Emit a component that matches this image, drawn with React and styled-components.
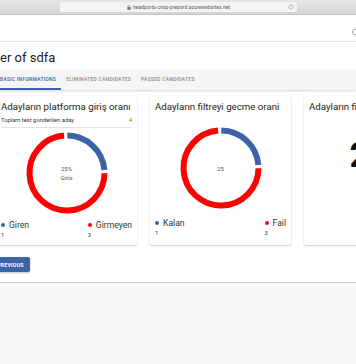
import React from "react";
import styled, { createGlobalStyle } from "styled-components";

const BLUE = "#3d62a6";
const RED = "#ff0000";

const charts = [
  {
    title: "Adayların platforma giriş oranı",
    summary: { label: "Toplam test gonderilen aday", value: 4 },
    share: 0.25,
    center: ["25%", "Giris"],
    legend: [
      { label: "Giren", value: 1, color: BLUE },
      { label: "Girmeyen", value: 3, color: RED },
    ],
    top: 3,
    bottom: 5,
  },
  {
    title: "Adayların filtreyi gecme orani",
    share: 0.25,
    center: ["25"],
    legend: [
      { label: "Kalan", value: 1, color: BLUE },
      { label: "Fail", value: 3, color: RED },
    ],
    top: 12,
    bottom: 8,
  },
];

function App() {
  return (
    <>
      <GlobalStyle />
      <Page>
        <BrowserBar>
          <Address>
            <svg width="4" height="5" viewBox="0 0 4 5">
              <rect x="0.3" y="2" width="3.4" height="2.8" rx="0.4" fill="#777" />
              <path d="M1 2V1.3a1 1 0 0 1 2 0V2" stroke="#777" strokeWidth="0.6" fill="none" />
            </svg>
            <Url>headports-cnsp-prepord.azurewebsites.net</Url>
            <Reload width="6" height="6" viewBox="0 0 6 6">
              <path d="M5 3a2 2 0 1 1-0.6-1.4" stroke="#8a8a8a" strokeWidth="0.6" fill="none" />
              <path d="M4.6 0.8v1.1H3.5" stroke="#8a8a8a" strokeWidth="0.6" fill="none" />
            </Reload>
          </Address>
        </BrowserBar>

        <AppHeader>
          <svg width="8" height="8" viewBox="0 0 8 8">
            <circle cx="4" cy="4" r="2.6" stroke="#9a9a9a" strokeWidth="0.8" fill="none" />
          </svg>
        </AppHeader>

        <Title>er of sdfa</Title>

        <Tabs>
          <Tab $active>BASIC INFORMATIONS</Tab>
          <Tab>ELIMINATED CANDIDATES</Tab>
          <Tab>PASSED CANDIDATES</Tab>
        </Tabs>

        <Cards>
          {charts.map((c) => (
            <Card key={c.title}>
              <CardTitle>{c.title}</CardTitle>
              {c.summary && (
                <Summary>
                  <span>{c.summary.label}</span>
                  <SummaryValue>{c.summary.value}</SummaryValue>
                </Summary>
              )}
              <Donut share={c.share} lines={c.center} top={c.top} bottom={c.bottom} />
              <Legend>
                {c.legend.map((l) => (
                  <LegendItem key={l.label}>
                    <LegendLabel>
                      <Dot $color={l.color} />
                      {l.label}
                    </LegendLabel>
                    <LegendValue>{l.value}</LegendValue>
                  </LegendItem>
                ))}
              </Legend>
            </Card>
          ))}
          <Card>
            <CardTitle>Adayların filtreyi gecme sayısı</CardTitle>
            <BigNumber>2/4</BigNumber>
          </Card>
        </Cards>

        <Actions>
          <Button>PREVIOUS</Button>
        </Actions>

        <Footer />
      </Page>
    </>
  );
}

function point(cx, cy, r, deg) {
  const a = ((deg - 90) * Math.PI) / 180;
  return [cx + r * Math.cos(a), cy + r * Math.sin(a)];
}

function arc(cx, cy, r, from, to) {
  const [x1, y1] = point(cx, cy, r, from);
  const [x2, y2] = point(cx, cy, r, to);
  const large = to - from > 180 ? 1 : 0;
  return `M${x1} ${y1} A${r} ${r} 0 ${large} 1 ${x2} ${y2}`;
}

function Donut({ share, lines, top, bottom }) {
  const split = share * 360;
  const gap = 2.5;
  const shift = -2;
  return (
    <DonutBox $top={top} $bottom={bottom}>
      <svg width="84" height="84" viewBox="0 0 84 84">
        <path d={arc(42, 42, 37.5, shift + gap, shift + split - gap)} stroke={BLUE} strokeWidth="6" fill="none" />
        <path d={arc(42, 42, 37.5, shift + split + gap, shift + 360 - gap)} stroke={RED} strokeWidth="6" fill="none" />
      </svg>
      <DonutText>
        {lines.map((t) => (
          <div key={t}>{t}</div>
        ))}
      </DonutText>
    </DonutBox>
  );
}

// Styled Components

const GlobalStyle = createGlobalStyle`
  html, body {
    margin: 0;
    padding: 0;
    background: #fff;
    font-family: Roboto, "Noto Sans", sans-serif;
  }
`;

const Page = styled.div`
  width: 356px;
  height: 364px;
  overflow: hidden;
  display: flex;
  flex-direction: column;
  background: #fff;
`;

const BrowserBar = styled.div`
  height: 15px;
  flex-shrink: 0;
  box-sizing: border-box;
  padding: 2px 0 0 60px;
  background: linear-gradient(#e6e6e6, #d4d4d4);
  border-bottom: 1px solid #c4c4c4;
`;

const Address = styled.div`
  width: 237px;
  height: 10px;
  box-sizing: border-box;
  display: flex;
  align-items: center;
  justify-content: center;
  gap: 2px;
  position: relative;
  background: #f3f3f3;
  border-radius: 2px;
`;

const Url = styled.span`
  font-size: 5px;
  color: #5a5a5a;
  letter-spacing: 0.05px;
`;

const Reload = styled.svg`
  position: absolute;
  right: 3px;
  top: 2px;
`;

const AppHeader = styled.div`
  height: 27px;
  flex-shrink: 0;
  box-sizing: border-box;
  display: flex;
  justify-content: flex-end;
  align-items: flex-end;
  padding: 0 0 5px 0;
  margin-right: -3px;
  border-bottom: 1px solid #e6e6e6;
`;

const Title = styled.h1`
  margin: 0;
  height: 28px;
  box-sizing: border-box;
  padding-top: 8px;
  font-size: 13px;
  line-height: 16px;
  font-weight: 400;
  color: #222;
  flex-shrink: 0;
`;

const Tabs = styled.div`
  height: 20px;
  flex-shrink: 0;
  display: flex;
  background: #f5f5f5;
  box-shadow: 0 1px 2px rgba(0, 0, 0, 0.18);
  margin-left: -5px;
`;

const Tab = styled.div`
  display: flex;
  align-items: center;
  padding: 0 5px;
  font-size: 5px;
  font-weight: 500;
  letter-spacing: 0.25px;
  color: ${(p) => (p.$active ? BLUE : "#8c8c8c")};
  border-bottom: 2px solid ${(p) => (p.$active ? BLUE : "transparent")};
  box-sizing: border-box;
  white-space: nowrap;
`;

const Cards = styled.div`
  display: flex;
  gap: 13px;
  margin: 6px 0 0 -4px;
  flex-shrink: 0;
`;

const Card = styled.div`
  width: 141px;
  flex-shrink: 0;
  box-sizing: border-box;
  padding: 4px 5px 6px;
  display: flex;
  flex-direction: column;
  background: #fff;
  border-radius: 2px;
  box-shadow: 0 1px 2px rgba(0, 0, 0, 0.2), 0 0 1px rgba(0, 0, 0, 0.08);
`;

const CardTitle = styled.div`
  font-size: 9.7px;
  line-height: 14px;
  color: #222;
  white-space: nowrap;
`;

const Summary = styled.div`
  display: flex;
  justify-content: space-between;
  margin-top: 2px;
  padding-bottom: 2px;
  font-size: 5.8px;
  line-height: 9px;
  color: #333;
  border-bottom: 1px solid #e2e2e2;
`;

const SummaryValue = styled.span`
  color: #3a9a3a;
`;

const DonutBox = styled.div`
  position: relative;
  align-self: center;
  width: 84px;
  height: 84px;
  margin: ${(p) => `${p.$top}px 0 ${p.$bottom}px`};
  svg {
    display: block;
  }
`;

const DonutText = styled.div`
  position: absolute;
  inset: 0;
  display: flex;
  flex-direction: column;
  align-items: center;
  justify-content: center;
  font-size: 6px;
  line-height: 9px;
  color: #555;
`;

const Legend = styled.div`
  display: flex;
  justify-content: space-between;
`;

const LegendItem = styled.div`
  display: flex;
  flex-direction: column;
`;

const LegendLabel = styled.div`
  display: flex;
  align-items: center;
  gap: 4px;
  font-size: 8.6px;
  line-height: 10px;
  color: #333;
`;

const Dot = styled.span`
  width: 4px;
  height: 4px;
  border-radius: 50%;
  background: ${(p) => p.$color};
`;

const LegendValue = styled.div`
  margin-top: 1px;
  font-size: 5.8px;
  line-height: 8px;
  color: #333;
`;

const BigNumber = styled.div`
  margin-top: 22px;
  align-self: center;
  font-size: 35px;
  line-height: 40px;
  font-weight: 700;
  letter-spacing: -1px;
  color: #111;
`;

const Actions = styled.div`
  display: flex;
  margin: 12px 0 0 -9px;
  flex-shrink: 0;
`;

const Button = styled.button`
  height: 15px;
  padding: 0 6px;
  border: none;
  border-radius: 2px;
  background: ${BLUE};
  color: #fff;
  font-family: Roboto, sans-serif;
  font-size: 5.3px;
  font-weight: 700;
  letter-spacing: 0.2px;
  box-shadow: 0 1px 2px rgba(0, 0, 0, 0.25);
`;

const Footer = styled.div`
  flex: 1;
  margin-top: 10px;
  border-top: 1px solid #cfcfcf;
  background: #f7f7f7;
`;

export default App;
